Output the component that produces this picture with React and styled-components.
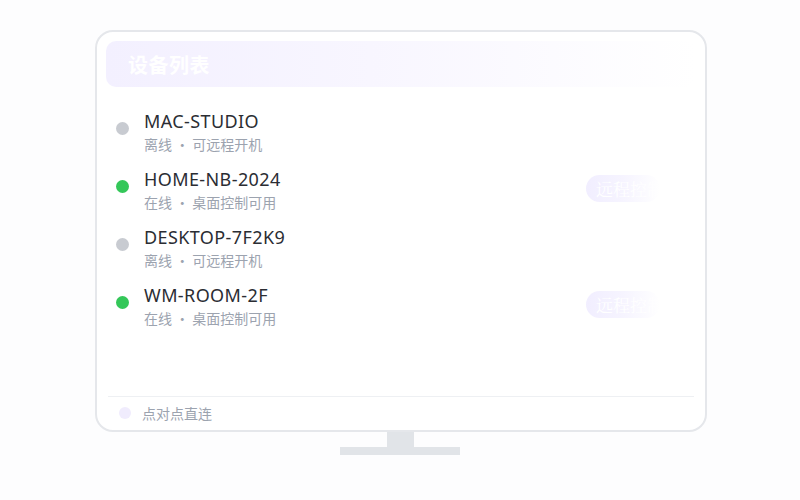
import React from "react";
import styled, { createGlobalStyle } from "styled-components";

const GlobalStyle = createGlobalStyle`
  html, body {
    margin: 0;
    padding: 0;
    background: #fdfdfe;
  }
  body {
    font-family: "Noto Sans", "Noto Sans CJK SC", sans-serif;
  }
`;

const devices = [
  { name: "MAC-STUDIO", online: false, note: "离线 · 可远程开机" },
  { name: "HOME-NB-2024", online: true, note: "在线 · 桌面控制可用" },
  { name: "DESKTOP-7F2K9", online: false, note: "离线 · 可远程开机" },
  { name: "WM-ROOM-2F", online: true, note: "在线 · 桌面控制可用" },
];

function App() {
  return (
    <Page>
      <GlobalStyle />
      <Monitor>
        <Header>
          <Title>设备列表</Title>
        </Header>
        <List>
          {devices.map((d) => (
            <Row key={d.name}>
              <Dot $online={d.online} />
              <Info>
                <Name>{d.name}</Name>
                <Note>{d.note}</Note>
              </Info>
              {d.online && <ControlButton>远程控制</ControlButton>}
            </Row>
          ))}
        </List>
        <Footer>
          <FooterDot />
          <FooterText>点对点直连</FooterText>
        </Footer>
      </Monitor>
      <Neck />
      <Base />
    </Page>
  );
}

export default App;

const Page = styled.div`
  width: 800px;
  height: 500px;
  display: flex;
  flex-direction: column;
  align-items: center;
  padding-top: 30px;
  box-sizing: border-box;
`;

const Monitor = styled.div`
  width: 612px;
  height: 402px;
  margin-left: 2px;
  box-sizing: border-box;
  border: 2px solid #e5e7eb;
  border-radius: 18px;
  background: #fff;
  padding: 9px 9px 0;
  display: flex;
  flex-direction: column;
`;

const Header = styled.div`
  height: 46px;
  border-radius: 10px;
  background: linear-gradient(90deg, #f3f0ff 0%, #f8f6ff 45%, #ffffff 100%);
  display: flex;
  align-items: center;
  padding-left: 22px;
`;

const Title = styled.div`
  color: #fff;
  font-size: 20px;
  font-weight: 700;
  font-family: "Noto Sans CJK SC", sans-serif;
  letter-spacing: 0.5px;
`;

const List = styled.div`
  flex: 1;
  padding-top: 16px;
  padding-left: 10px;
`;

const Row = styled.div`
  display: flex;
  align-items: flex-start;
  height: 58px;
  padding-top: 7px;
  box-sizing: border-box;
`;

const Dot = styled.div`
  width: 13px;
  height: 13px;
  border-radius: 50%;
  margin-top: 12px;
  flex-shrink: 0;
  background: ${(p) => (p.$online ? "#34c759" : "#c8cbd1")};
`;

const Info = styled.div`
  margin-left: 15px;
  display: flex;
  flex-direction: column;
`;

const Name = styled.div`
  font-size: 18px;
  line-height: 22px;
  letter-spacing: 0.4px;
  color: #2b2d33;
  font-family: "Noto Sans", sans-serif;
`;

const Note = styled.div`
  margin-top: 2px;
  font-size: 14px;
  line-height: 20px;
  color: #9ca3af;
  font-family: "Noto Sans CJK SC", sans-serif;
`;

const ControlButton = styled.div`
  margin-left: auto;
  margin-right: 36px;
  margin-top: 7px;
  width: 74px;
  height: 27px;
  border-radius: 14px;
  box-sizing: border-box;
  padding-left: 10px;
  overflow: hidden;
  white-space: nowrap;
  background: linear-gradient(90deg, #f1eeff 0%, #f6f4ff 50%, #ffffff 100%);
  color: #fff;
  font-family: "Noto Serif CJK SC", "Liberation Serif", serif;
  font-size: 17px;
  line-height: 27px;
`;

const Footer = styled.div`
  margin: 0 2px;
  border-top: 1px solid #eef0f3;
  height: 34px;
  display: flex;
  align-items: center;
  padding-left: 11px;
  padding-bottom: 2px;
  box-sizing: border-box;
`;

const FooterDot = styled.div`
  width: 12px;
  height: 12px;
  border-radius: 50%;
  background: #f0ecfd;
`;

const FooterText = styled.div`
  margin-left: 11px;
  font-size: 14px;
  color: #9ca3af;
  font-family: "Noto Sans CJK SC", sans-serif;
`;

const Neck = styled.div`
  width: 27px;
  height: 15px;
  background: #e1e4e8;
`;

const Base = styled.div`
  width: 120px;
  height: 8px;
  background: #e1e4e8;
`;
